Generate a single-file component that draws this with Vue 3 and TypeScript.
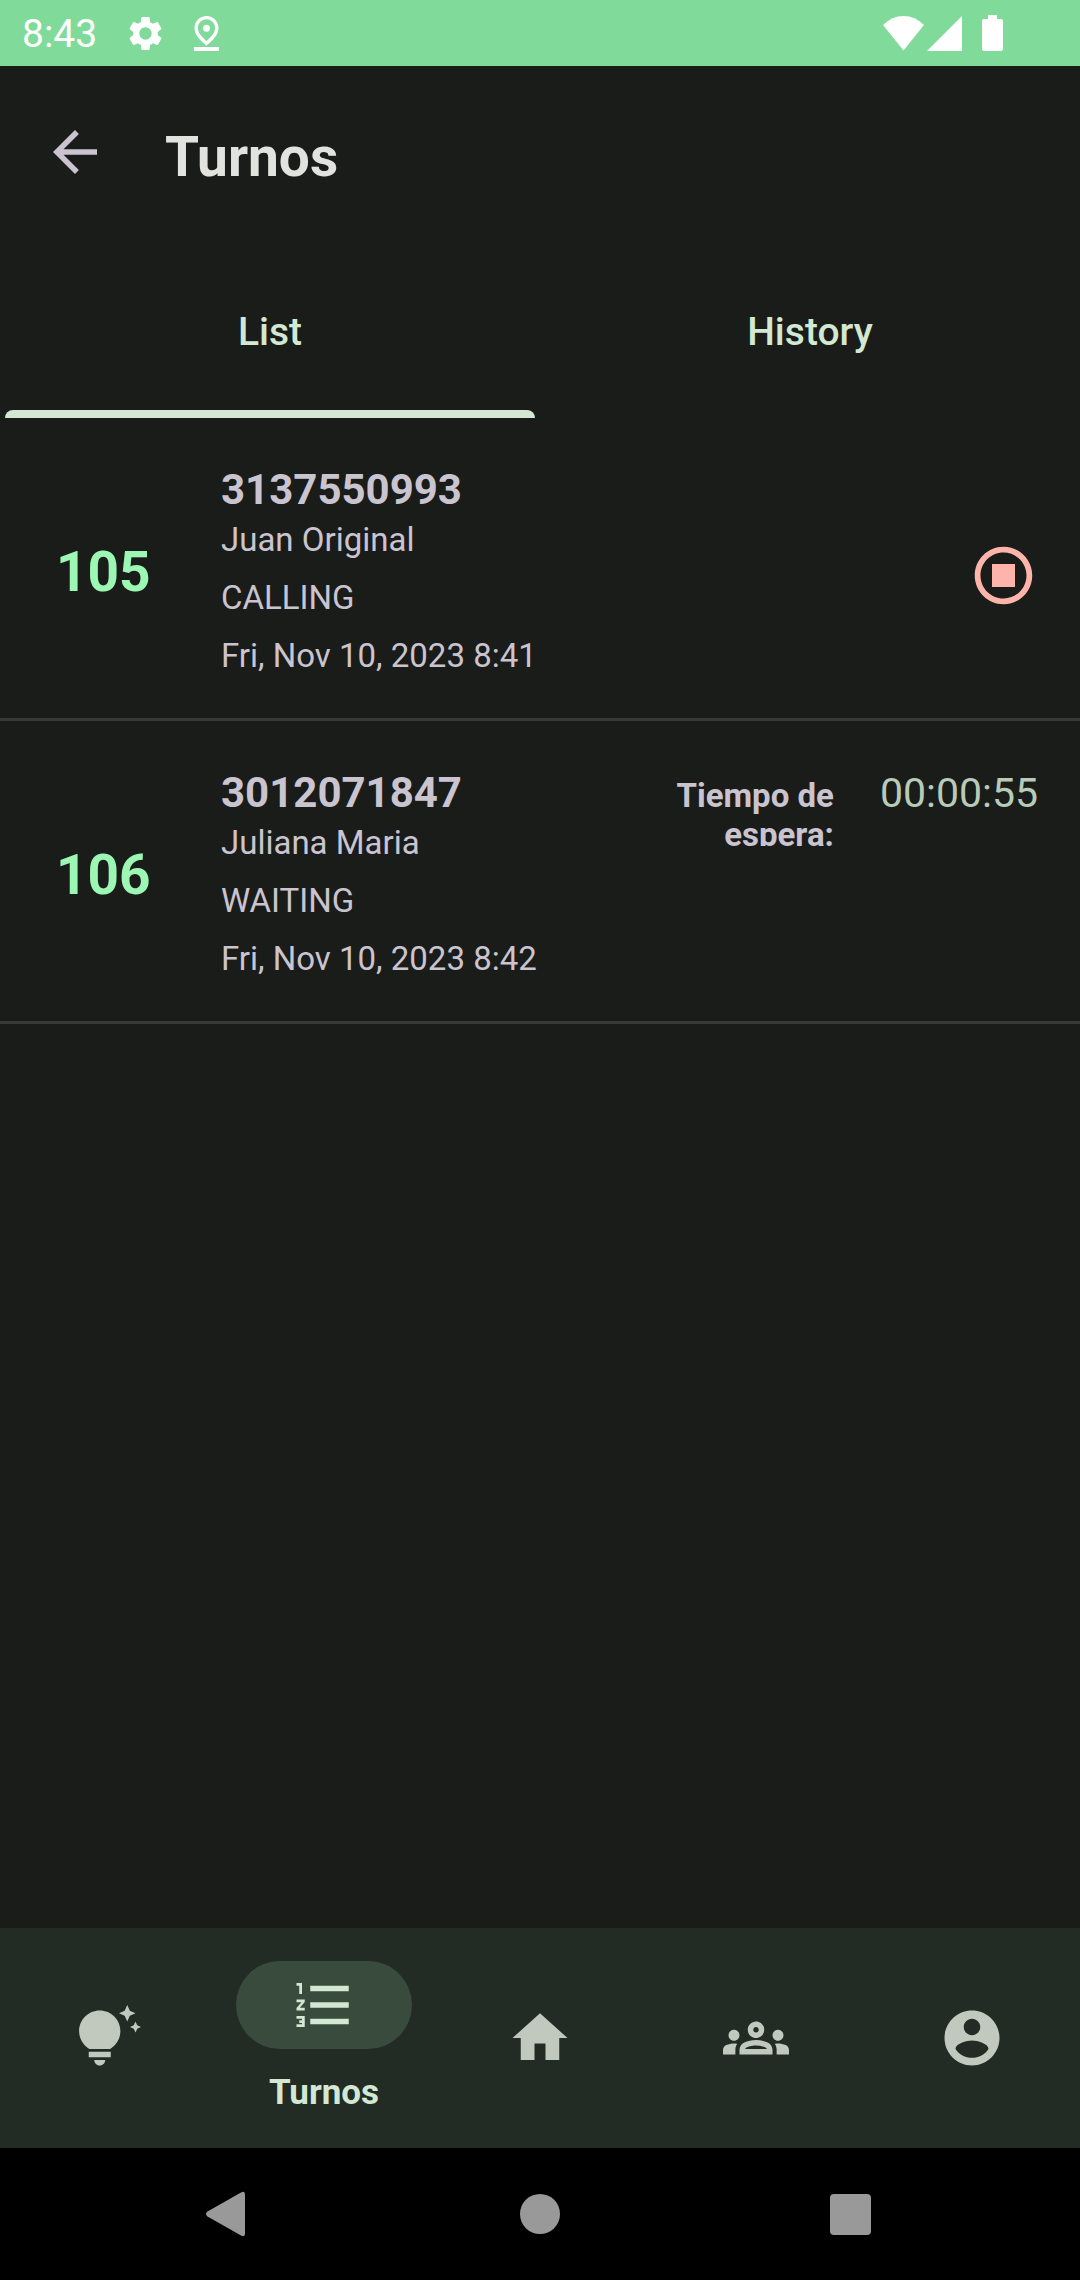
<script setup lang="ts">
import { ref } from 'vue'

interface Turn {
  number: number
  phone: string
  name: string
  status: 'CALLING' | 'WAITING'
  date: string
  wait?: string
}

interface Destination {
  label: string
  path: string
}

const tabs: string[] = ['List', 'History']
const activeTab = ref<string>('List')

const turns: Turn[] = [
  { number: 105, phone: '3137550993', name: 'Juan Original', status: 'CALLING', date: 'Fri, Nov 10, 2023 8:41' },
  { number: 106, phone: '3012071847', name: 'Juliana Maria', status: 'WAITING', date: 'Fri, Nov 10, 2023 8:42', wait: '00:00:55' },
]

const destinations: Destination[] = [
  {
    label: 'Tips',
    path: 'M7 20h4c0 1.1-.9 2-2 2s-2-.9-2-2zm-2-1h8v-2H5v2zm11.5-9.5c0 3.82-2.66 5.86-3.77 6.5H5.27c-1.11-.64-3.77-2.68-3.77-6.5C1.5 5.36 4.86 2 9 2s7.5 3.36 7.5 7.5zm4.87-2.13L20 8l1.37.63L22 10l.63-1.37L24 8l-1.37-.63L22 6l-.63 1.37zM19 6l.94-2.06L22 3l-2.06-.94L19 0l-.94 2.06L16 3l2.06.94L19 6z',
  },
  {
    label: 'Turnos',
    path: 'M2 17h2v.5H3v1h1v.5H2v1h3v-4H2v1zm1-9h1V4H2v1h1v3zm-1 3h1.8L2 13.1v.9h3v-1H3.2L5 10.9V10H2v1zm5-6v2h14V5H7zm0 14h14v-2H7v2zm0-6h14v-2H7v2z',
  },
  { label: 'Home', path: 'M10 20v-6h4v6h5v-8h3L12 3 2 12h3v8z' },
  {
    label: 'Groups',
    path: 'M4 13c1.1 0 2-.9 2-2s-.9-2-2-2-2 .9-2 2 .9 2 2 2zm1.13 1.1C4.76 14.04 4.39 14 4 14c-.99 0-1.93.21-2.78.58C.48 14.9 0 15.62 0 16.43V18h4.5v-1.61c0-.83.23-1.61.63-2.29zM20 13c1.1 0 2-.9 2-2s-.9-2-2-2-2 .9-2 2 .9 2 2 2zm4 3.43c0-.81-.48-1.53-1.22-1.85-.85-.37-1.79-.58-2.78-.58-.39 0-.76.04-1.13.1.4.68.63 1.46.63 2.29V18H24v-1.57zm-7.76-2.78C15.07 13.13 13.63 12.75 12 12.75s-3.07.39-4.24.9C6.68 14.13 6 15.21 6 16.39V18h12v-1.61c0-1.18-.68-2.26-1.76-2.74zM8.07 16c.09-.23.13-.39.91-.69.97-.38 1.99-.56 3.02-.56s2.05.18 3.02.56c.77.3.81.46.91.69H8.07zM12 8c.55 0 1 .45 1 1s-.45 1-1 1-1-.45-1-1 .45-1 1-1m0-2c-1.66 0-3 1.34-3 3s1.34 3 3 3 3-1.34 3-3-1.34-3-3-3z',
  },
  {
    label: 'Account',
    path: 'M12 2C6.48 2 2 6.48 2 12s4.48 10 10 10 10-4.48 10-10S17.52 2 12 2zm0 3c1.66 0 3 1.34 3 3s-1.34 3-3 3-3-1.34-3-3 1.34-3 3-3zm0 14.2c-2.5 0-4.71-1.28-6-3.22.03-1.99 4-3.08 6-3.08 1.99 0 5.97 1.09 6 3.08-1.29 1.94-3.5 3.22-6 3.22z',
  },
]
const activeDestination = ref<string>('Turnos')
</script>

<template>
  <div class="screen">
    <div class="status-bar">
      <div class="status-group status-left">
        <span class="clock">8:43</span>
        <svg width="41" height="41" viewBox="0 0 24 24" aria-hidden="true">
          <path d="M19.14 12.94c.04-.3.06-.61.06-.94 0-.32-.02-.64-.07-.94l2.03-1.58c.18-.14.23-.41.12-.61l-1.92-3.32c-.12-.22-.37-.29-.59-.22l-2.39.96c-.5-.38-1.03-.7-1.62-.94l-.36-2.54c-.04-.24-.24-.41-.48-.41h-3.84c-.24 0-.43.17-.47.41l-.36 2.54c-.59.24-1.13.57-1.62.94l-2.39-.96c-.22-.08-.47 0-.59.22L2.74 8.87c-.12.21-.08.47.12.61l2.03 1.58c-.05.3-.09.63-.09.94s.02.64.07.94l-2.03 1.58c-.18.14-.23.41-.12.61l1.92 3.32c.12.22.37.29.59.22l2.39-.96c.5.38 1.03.7 1.62.94l.36 2.54c.05.24.24.41.48.41h3.84c.24 0 .44-.17.47-.41l.36-2.54c.59-.24 1.13-.56 1.62-.94l2.39.96c.22.08.47 0 .59-.22l1.92-3.32c.12-.22.07-.47-.12-.61l-2.01-1.58zM12 15.6c-1.98 0-3.6-1.62-3.6-3.6s1.62-3.6 3.6-3.6 3.6 1.62 3.6 3.6-1.62 3.6-3.6 3.6z" />
        </svg>
        <svg width="25" height="35" viewBox="0 0 25 35" aria-hidden="true">
          <path fill-rule="evenodd" d="M12.500 0C19 0 24.500 5 24.500 12c0 7-5.500 12-12 17.500C6 24 .5 19 .5 12 .5 5 6 0 12.500 0zm0 3.300C8 3.300 3.900 6.800 3.900 12c0 5 3.900 8.700 8.600 13 4.700-4.300 8.600-8 8.600-13 0-5.200-4.100-8.700-8.600-8.700z" />
          <circle cx="12.500" cy="12.300" r="3.500" />
          <path d="M0 31h25v4H0z" />
        </svg>
      </div>
      <div class="status-group status-right">
        <svg width="41" height="35" viewBox="0 0 41 35" aria-hidden="true">
          <path d="M0 9Q9 0 20.500 0T41 9L20.500 34.500z" />
        </svg>
        <svg width="35" height="35" viewBox="0 0 35 35" aria-hidden="true">
          <path d="M35 0v35H0z" />
        </svg>
        <svg class="battery" width="21" height="36" viewBox="0 0 21 36" aria-hidden="true">
          <path d="M6 0h9v4h4a2 2 0 0 1 2 2v28a2 2 0 0 1-2 2H2a2 2 0 0 1-2-2V6a2 2 0 0 1 2-2h4z" />
        </svg>
      </div>
    </div>

    <header class="app-bar">
      <button class="icon-button" type="button" aria-label="Back">
        <svg width="66" height="66" viewBox="0 0 24 24" aria-hidden="true">
          <path d="M20 11H7.830l5.590-5.590L12 4l-8 8 8 8 1.410-1.410L7.830 13H20v-2z" />
        </svg>
      </button>
      <h1 class="title">Turnos</h1>
    </header>

    <div class="tabs" role="tablist">
      <button
        v-for="tab in tabs"
        :key="tab"
        class="tab"
        :class="{ active: tab === activeTab }"
        type="button"
        role="tab"
        :aria-selected="tab === activeTab"
        @click="activeTab = tab"
      >
        {{ tab }}
      </button>
    </div>

    <main class="content">
      <ul class="turns">
        <li v-for="turn in turns" :key="turn.number" class="turn">
          <span class="turn-number">{{ turn.number }}</span>
          <div class="turn-info">
            <p class="phone">{{ turn.phone }}</p>
            <p>{{ turn.name }}</p>
            <p>{{ turn.status }}</p>
            <p>{{ turn.date }}</p>
          </div>
          <div v-if="turn.wait" class="wait">
            <span class="wait-label">Tiempo de espera:</span>
            <span class="wait-time">{{ turn.wait }}</span>
          </div>
          <button v-else class="icon-button stop" type="button" aria-label="Stop">
            <svg width="69" height="69" viewBox="0 0 24 24" aria-hidden="true">
              <path d="M12 2C6.480 2 2 6.480 2 12s4.480 10 10 10 10-4.480 10-10S17.520 2 12 2zm0 18c-4.420 0-8-3.580-8-8s3.580-8 8-8 8 3.580 8 8-3.580 8-8 8zM8 8h8v8H8z" />
            </svg>
          </button>
        </li>
      </ul>
    </main>

    <nav class="bottom-bar" aria-label="Main">
      <button
        v-for="item in destinations"
        :key="item.label"
        class="destination"
        :class="{ active: item.label === activeDestination }"
        type="button"
        :aria-label="item.label"
        @click="activeDestination = item.label"
      >
        <span class="pill">
          <svg width="66" height="66" viewBox="0 0 24 24" aria-hidden="true">
            <path :d="item.path" />
          </svg>
        </span>
        <span v-if="item.label === activeDestination" class="destination-label">{{ item.label }}</span>
      </button>
    </nav>

    <div class="system-bar">
      <button class="system-button" type="button" aria-label="System back">
        <svg width="48" height="48" viewBox="0 0 48 48" aria-hidden="true">
          <path d="M2.500 21.500L36 2.500Q40 .5 40 4.500v39q0 4-4 2L2.500 26.500Q-.5 24 2.500 21.500z" />
        </svg>
      </button>
      <button class="system-button" type="button" aria-label="System home">
        <svg width="48" height="48" viewBox="0 0 48 48" aria-hidden="true">
          <circle cx="24" cy="24" r="20" />
        </svg>
      </button>
      <button class="system-button" type="button" aria-label="Recent apps">
        <svg width="48" height="48" viewBox="0 0 48 48" aria-hidden="true">
          <rect x="3" y="4" width="41" height="41" rx="4" />
        </svg>
      </button>
    </div>
  </div>
</template>

<style>
body {
  background: #1a1c19;
}
</style>

<style scoped>
.screen {
  display: flex;
  flex-direction: column;
  min-height: 100vh;
  background: #1a1c19;
  color: #cac4d0;
  font-family: Roboto, 'Liberation Sans', sans-serif;
  font-size: 33px;
}

button {
  padding: 0;
  border: 0;
  background: none;
  color: inherit;
  font: inherit;
  cursor: pointer;
}

svg {
  display: block;
  flex: none;
  fill: currentColor;
}

.status-bar {
  display: flex;
  justify-content: space-between;
  height: 66px;
  padding: 0 77px 0 22px;
  background: #80da99;
  color: #fff;
}

.status-group {
  display: flex;
  align-items: center;
}

.status-left {
  gap: 28px;
}

.status-right {
  gap: 3px;
}

.battery {
  margin-left: 17px;
}

.clock {
  font-size: 39px;
  line-height: 46px;
  padding-top: 2px;
}

.app-bar {
  display: flex;
  align-items: flex-start;
  gap: 57px;
  height: 176px;
  box-sizing: border-box;
  padding: 53px 42px 0;
}

.title {
  margin: 0;
  color: #e2e3de;
  font-size: 55px;
  font-weight: 700;
  line-height: 76px;
}

.tabs {
  display: flex;
}

.tab {
  position: relative;
  flex: 1;
  height: 176px;
  padding-top: 3px;
  color: #d3e8d3;
  font-size: 39px;
  font-weight: 500;
}

.tab.active::after {
  content: '';
  position: absolute;
  right: 5px;
  bottom: 0;
  left: 5px;
  height: 8px;
  border-radius: 8px 8px 0 0;
  background: #d3e8d3;
}

.content {
  flex: 1;
}

.turns {
  margin: 0;
  padding: 0;
  list-style: none;
}

.turn {
  display: flex;
  align-items: center;
  padding: 46px 42px 38px 56px;
  border-bottom: 3px solid #383a37;
}

.turn-number {
  width: 165px;
  color: #9df7b4;
  font-size: 55px;
  font-weight: 700;
}

.turn-info {
  flex: 1;
  line-height: 48px;
}

.turn-info p {
  margin: 0 0 10px;
}

.turn-info .phone {
  margin: 0;
  font-size: 42px;
  font-weight: 700;
  line-height: 52px;
}

.turn-info p:last-child {
  margin: 0;
}

.stop {
  align-self: flex-start;
  padding-top: 77px;
  color: #ffb4ab;
}

.wait {
  display: flex;
  align-self: flex-start;
  gap: 46px;
  height: 79px;
  overflow: hidden;
}

.wait-label {
  width: 180px;
  padding-top: 9px;
  font-weight: 700;
  line-height: 39px;
  text-align: right;
}

.wait-time {
  color: #b7ccb8;
  font-size: 41px;
  line-height: 52px;
}

.bottom-bar {
  display: flex;
  height: 220px;
  background: #222b24;
  color: #c1c9bf;
}

.destination {
  display: flex;
  flex: 1;
  flex-direction: column;
  align-items: center;
  justify-content: center;
  gap: 22px;
}

.pill {
  display: flex;
  align-items: center;
  justify-content: center;
  width: 176px;
  height: 88px;
  border-radius: 44px;
}

.destination.active {
  color: #d3e8d3;
}

.destination.active .pill {
  background: #394b3d;
}

.destination-label {
  font-size: 35px;
  font-weight: 700;
  line-height: 44px;
}

.system-bar {
  display: flex;
  align-items: center;
  justify-content: center;
  gap: 263px;
  height: 132px;
  background: #000;
  color: #999;
}
</style>
